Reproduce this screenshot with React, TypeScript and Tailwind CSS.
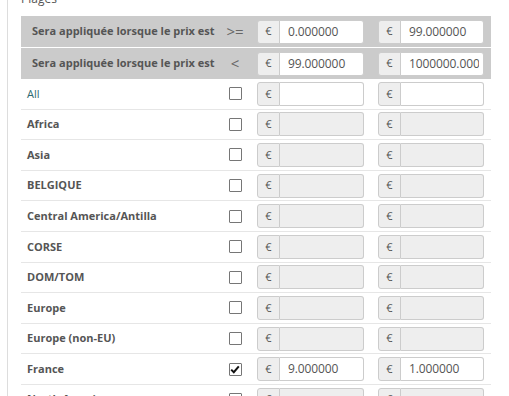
import React from 'react'

type Zone = { name: string; enabled: boolean; checked?: boolean; min?: string; max?: string; plain?: boolean }

const zones: Zone[] = [
  { name: 'All', enabled: true, plain: true },
  { name: 'Africa', enabled: false },
  { name: 'Asia', enabled: false },
  { name: 'BELGIQUE', enabled: false },
  { name: 'Central America/Antilla', enabled: false },
  { name: 'CORSE', enabled: false },
  { name: 'DOM/TOM', enabled: false },
  { name: 'Europe', enabled: false },
  { name: 'Europe (non-EU)', enabled: false },
  { name: 'France', enabled: true, checked: true, min: '9.000000', max: '1.000000' },
  { name: 'North America', enabled: false },
  { name: 'Oceania', enabled: false },
]

function PriceInput({ value, disabled }: { value?: string; disabled?: boolean }) {
  return (
    <div className="flex h-6 w-full">
      <span className="flex w-[23px] shrink-0 items-center justify-center rounded-l-[3px] border border-[#ccc] bg-[#eee] text-[11px] text-[#555]">
        €
      </span>
      <input
        readOnly
        disabled={disabled}
        value={value ?? ''}
        className={
          'min-w-0 flex-1 rounded-r-[3px] border border-l-0 border-[#ccc] pl-[8px] pr-[4px] text-[12px] tracking-[-0.1px] text-[#555] outline-none ' +
          (disabled ? 'bg-[#eee]' : 'bg-white')
        }
      />
    </div>
  )
}

function Checkbox({ checked }: { checked?: boolean }) {
  return (
    <span className="flex h-[13px] w-[13px] items-center justify-center rounded-[1px] border border-[#767676] bg-white">
      {checked && (
        <svg width="10" height="9" viewBox="0 0 10 9">
          <path d="M1.2 4.6 L3.8 7.2 L8.8 1.4" fill="none" stroke="#111" strokeWidth="2" />
        </svg>
      )}
    </span>
  )
}

export default function App() {
  const cols = 'grid grid-cols-[199px_30px_121px_120px] items-center'

  return (
    <div className="min-h-screen overflow-hidden bg-white pl-[7px] font-['Open_Sans',sans-serif]">
      <div className="min-h-screen border-l border-[#ddd] pl-[13px] pr-[18px]">
        <h4 className="mt-[-9px] mb-[9px] text-[12px] leading-4 text-[#555]">Plages</h4>

        {/* header ranges */}
        <div className={cols + ' h-[32px] border-b border-white bg-[#cbcbcb]'}>
          <span className="pl-[11px] text-[11px] font-bold text-[#555]">Sera appliquée lorsque le prix est</span>
          <span className="text-center text-[15px] leading-none text-[#666]">&gt;=</span>
          <div className="px-[7px]"><PriceInput value="0.000000" /></div>
          <div className="px-[7px]"><PriceInput value="99.000000" /></div>
        </div>
        <div className={cols + ' h-[31px] bg-[#cbcbcb]'}>
          <span className="pl-[11px] text-[11px] font-bold text-[#555]">Sera appliquée lorsque le prix est</span>
          <span className="text-center text-[15px] leading-none text-[#666]">&lt;</span>
          <div className="px-[7px]"><PriceInput value="99.000000" /></div>
          <div className="px-[7px]"><PriceInput value="1000000.000000" /></div>
        </div>

        {/* zones */}
        {zones.map(z => (
          <div key={z.name} className={cols + ' h-[30.6px] border-b border-[#e6e6e6]'}>
            <span
              className={
                'pl-[6px] text-[11px] ' + (z.plain ? 'font-normal text-[#2c6a70]' : 'font-bold text-[#555]')
              }
            >
              {z.name}
            </span>
            <div className="flex justify-center">
              <Checkbox checked={z.checked} />
            </div>
            <div className="px-[7px]"><PriceInput value={z.min} disabled={!z.enabled} /></div>
            <div className="px-[7px]"><PriceInput value={z.max} disabled={!z.enabled} /></div>
          </div>
        ))}
      </div>
    </div>
  )
}
